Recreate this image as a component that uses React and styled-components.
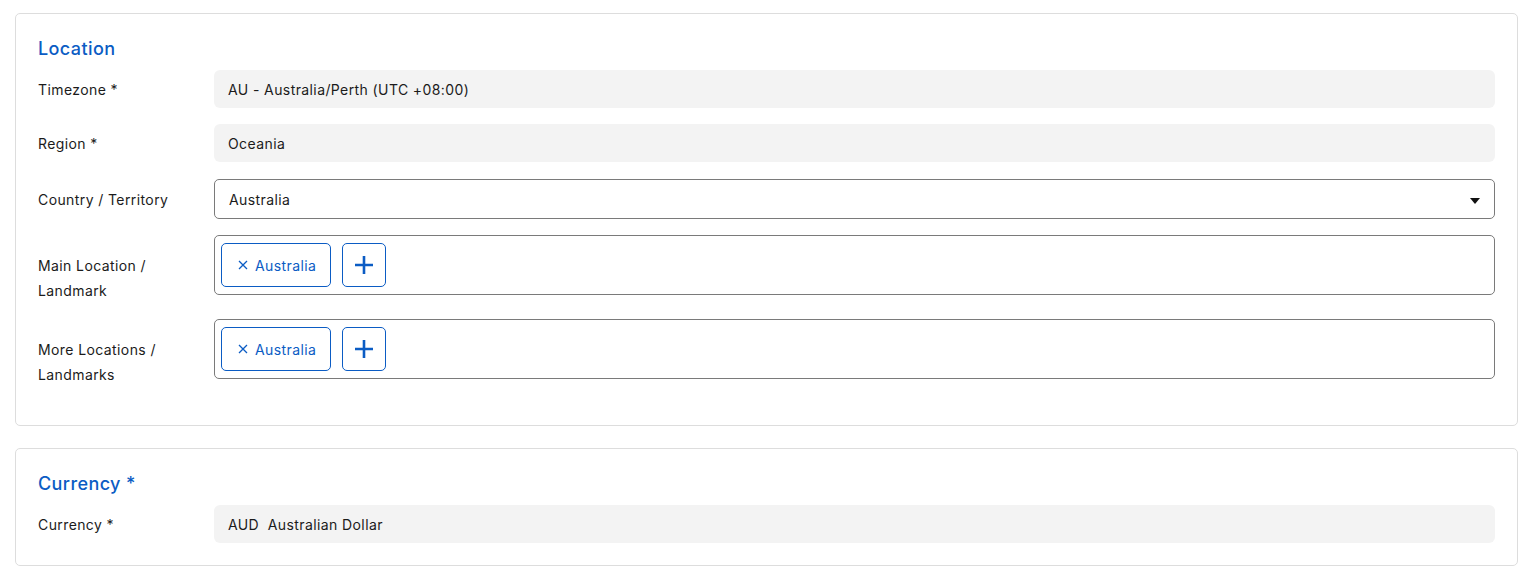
import React from 'react';
import styled, { createGlobalStyle } from 'styled-components';

const GlobalStyle = createGlobalStyle`
  body {
    margin: 0;
    background: #fff;
    font-family: Inter, "Noto Sans", "Liberation Sans", sans-serif;
    letter-spacing: 0.4px;
    color: #1b1b1b;
  }
`;

const Page = styled.div`
  padding: 13px 10px 0 15px;
  display: flex;
  flex-direction: column;
  gap: 22px;
`;

const Card = styled.section`
  border: 1px solid #dddddd;
  border-radius: 5px;
  background: #fff;
  padding: 23px 22px ${(p) => p.$bottom || 22}px;
`;

const Heading = styled.h2`
  margin: 0 0 9px;
  font-size: 18px;
  line-height: 24px;
  font-weight: 500;
  color: #0b5cc4;
`;

const Rows = styled.div`
  display: flex;
  flex-direction: column;
  gap: 16px;
`;

const Row = styled.div`
  display: grid;
  grid-template-columns: 176px 1fr;
  align-items: start;
  margin-top: ${(p) => p.$shift || 0}px;
`;

const Label = styled.div`
  font-size: 14px;
  line-height: 25px;
  padding-top: ${(p) => p.$offset}px;
  padding-right: 20px;
`;

const ReadOnly = styled.div`
  height: 38px;
  display: flex;
  align-items: center;
  padding: 0 14px;
  background: #f3f3f3;
  border-radius: 6px;
  font-size: 14px;
`;

const Select = styled.div`
  height: 38px;
  display: flex;
  align-items: center;
  justify-content: space-between;
  padding: 0 14px 0 14px;
  border: 1px solid #7a7a7a;
  border-radius: 5px;
  font-size: 14px;
`;

const Caret = styled.span`
  width: 0;
  height: 0;
  margin-top: 4px;
  border-left: 5px solid transparent;
  border-right: 5px solid transparent;
  border-top: 6px solid #111;
`;

const TagBox = styled.div`
  box-sizing: border-box;
  height: 60px;
  display: flex;
  align-items: center;
  gap: 11px;
  padding: 0 6px;
  border: 1px solid #7a7a7a;
  border-radius: 5px;
`;

const Tag = styled.button`
  height: 44px;
  display: flex;
  align-items: center;
  gap: 7px;
  padding: 0 14px 0 16px;
  border: 1px solid #0b5cc4;
  border-radius: 5px;
  background: #fff;
  color: #0b5cc4;
  font-family: inherit;
  letter-spacing: inherit;
  font-size: 14px;
  cursor: pointer;
`;

const AddButton = styled.button`
  width: 44px;
  height: 44px;
  display: flex;
  align-items: center;
  justify-content: center;
  padding: 0;
  border: 1px solid #0b5cc4;
  border-radius: 5px;
  background: #fff;
  color: #0b5cc4;
  cursor: pointer;
`;

const CloseIcon = () => (
  <svg width="10" height="10" viewBox="0 0 10 10">
    <path d="M1 1 L9 9 M9 1 L1 9" stroke="currentColor" strokeWidth="1.3" />
  </svg>
);

const PlusIcon = () => (
  <svg width="20" height="20" viewBox="0 0 20 20">
    <path d="M10 1 V19 M1 10 H19" stroke="currentColor" strokeWidth="2.6" />
  </svg>
);

const Tags = ({ items }) => (
  <TagBox>
    {items.map((t) => (
      <Tag key={t}>
        <CloseIcon />
        {t}
      </Tag>
    ))}
    <AddButton aria-label="Add">
      <PlusIcon />
    </AddButton>
  </TagBox>
);

export default function App() {
  return (
    <>
      <GlobalStyle />
      <Page>
        <Card $bottom={38}>
          <Heading>Location</Heading>
          <Rows>
            <Row>
              <Label $offset={6.5}>Timezone *</Label>
              <ReadOnly>AU - Australia/Perth (UTC +08:00)</ReadOnly>
            </Row>
            <Row>
              <Label $offset={6.5}>Region *</Label>
              <ReadOnly>Oceania</ReadOnly>
            </Row>
            <Row $shift={1}>
              <Label $offset={7.5}>Country / Territory</Label>
              <Select>
                Australia
                <Caret />
              </Select>
            </Row>
            <Row>
              <Label $offset={18}>Main Location / Landmark</Label>
              <Tags items={['Australia']} />
            </Row>
            <Row>
              <Label $offset={18}>More Locations / Landmarks</Label>
              <Tags items={['Australia']} />
            </Row>
          </Rows>
        </Card>
        <Card>
          <Heading>Currency *</Heading>
          <Rows>
            <Row>
              <Label $offset={6.5}>Currency *</Label>
              <ReadOnly>AUD&nbsp;&nbsp;Australian Dollar</ReadOnly>
            </Row>
          </Rows>
        </Card>
      </Page>
    </>
  );
}
